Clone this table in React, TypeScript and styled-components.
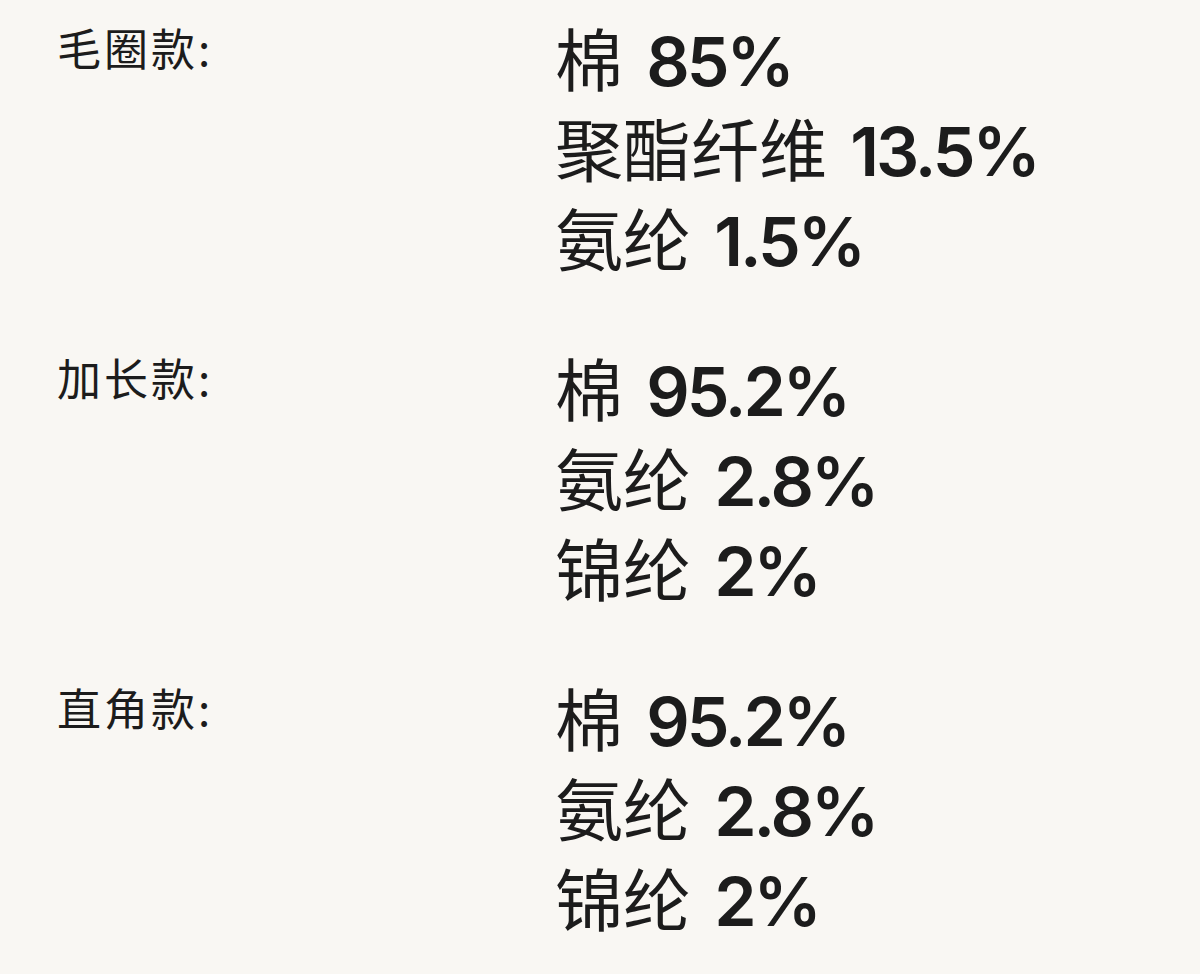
import React from 'react';
import styled, { createGlobalStyle } from 'styled-components';

const GlobalStyle = createGlobalStyle`
  html, body {
    margin: 0;
    padding: 0;
    background: #f9f7f3;
  }
  body {
    font-family: 'Inter', 'Noto Sans CJK SC', sans-serif;
    color: #1c1c1c;
  }
`;

const Page = styled.div`
  min-height: 974px;
  padding: 12px 0 0 57px;
  display: flex;
  flex-direction: column;
  gap: 60px;
  box-sizing: border-box;
`;

const Group = styled.section`
  display: grid;
  grid-template-columns: 498px 1fr;
  align-items: start;
`;

const Label = styled.div`
  font-family: 'Noto Sans CJK SC', sans-serif;
  font-size: 44px;
  line-height: 1;
  letter-spacing: 3px;
  margin-top: 13px;
`;

const Values = styled.div`
  display: flex;
  flex-direction: column;
`;

const Line = styled.div`
  height: 90px;
  font-size: 68px;
  line-height: 90px;
  white-space: nowrap;
`;

const Name = styled.span`
  font-family: 'Noto Sans CJK SC', sans-serif;
  font-weight: 400;
`;

const Pct = styled.span`
  font-family: 'Inter', sans-serif;
  font-weight: 600;
  letter-spacing: -3px;
  margin-left: 4px;
`;

type Item = { name: string; pct: string };

const groups: { label: string; items: Item[] }[] = [
  {
    label: '毛圈款:',
    items: [
      { name: '棉', pct: '85%' },
      { name: '聚酯纤维', pct: '13.5%' },
      { name: '氨纶', pct: '1.5%' },
    ],
  },
  {
    label: '加长款:',
    items: [
      { name: '棉', pct: '95.2%' },
      { name: '氨纶', pct: '2.8%' },
      { name: '锦纶', pct: '2%' },
    ],
  },
  {
    label: '直角款:',
    items: [
      { name: '棉', pct: '95.2%' },
      { name: '氨纶', pct: '2.8%' },
      { name: '锦纶', pct: '2%' },
    ],
  },
];

export default function App() {
  return (
    <>
      <GlobalStyle />
      <Page>
        {groups.map((g) => (
          <Group key={g.label}>
            <Label>{g.label}</Label>
            <Values>
              {g.items.map((it) => (
                <Line key={it.name}>
                  <Name>{it.name}</Name> <Pct>{it.pct}</Pct>
                </Line>
              ))}
            </Values>
          </Group>
        ))}
      </Page>
    </>
  );
}
